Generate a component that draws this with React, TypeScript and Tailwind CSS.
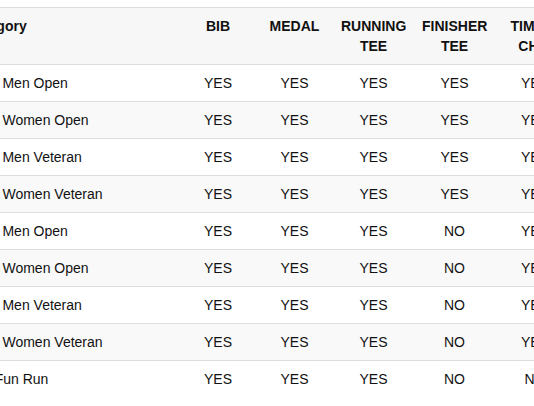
const rows: [string, string[]][] = [
  ["21KM Men Open", ["YES", "YES", "YES", "YES", "YES"]],
  ["21KM Women Open", ["YES", "YES", "YES", "YES", "YES"]],
  ["21KM Men Veteran", ["YES", "YES", "YES", "YES", "YES"]],
  ["21KM Women Veteran", ["YES", "YES", "YES", "YES", "YES"]],
  ["10KM Men Open", ["YES", "YES", "YES", "NO", "YES"]],
  ["10KM Women Open", ["YES", "YES", "YES", "NO", "YES"]],
  ["10KM Men Veteran", ["YES", "YES", "YES", "NO", "YES"]],
  ["10KM Women Veteran", ["YES", "YES", "YES", "NO", "YES"]],
  ["5KM Fun Run", ["YES", "YES", "YES", "NO", "NO"]],
];

const headers = ["BIB", "MEDAL", "RUNNING TEE", "FINISHER TEE", "TIMING CHIP"];

export default function App() {
  return (
    <div
      className="w-[534px] h-[406px] overflow-hidden bg-white pt-[7px] text-[#111] text-[14px] leading-5"
      style={{ fontFamily: '"Liberation Sans", Arial, sans-serif' }}
    >
      <table className="table-fixed border-collapse w-[621px] ml-[-46px]">
        <colgroup>
          <col className="w-[226px]" />
          <col className="w-[76px]" />
          <col className="w-[77px]" />
          <col className="w-[81px]" />
          <col className="w-[81px]" />
          <col className="w-[80px]" />
        </colgroup>
        <thead>
          <tr className="bg-[#f7f7f7]">
            <th className="border-t border-[#dddddd] pl-3 pr-2 py-2 text-left align-top font-bold">
              Category
            </th>
            {headers.map((h) => (
              <th
                key={h}
                className="border-t border-[#dddddd] px-2 py-2 text-center align-top font-bold"
              >
                {h}
              </th>
            ))}
          </tr>
        </thead>
        <tbody>
          {rows.map(([name, vals], i) => (
            <tr key={i} className={i % 2 === 1 ? "bg-[#f9f9f9]" : "bg-white"}>
              <td className="border-t border-[#dddddd] px-2 py-2 text-left whitespace-nowrap">
                {name}
              </td>
              {vals.map((v, j) => (
                <td key={j} className="border-t border-[#dddddd] px-2 py-2 text-center">
                  {v}
                </td>
              ))}
            </tr>
          ))}
        </tbody>
      </table>
    </div>
  );
}
